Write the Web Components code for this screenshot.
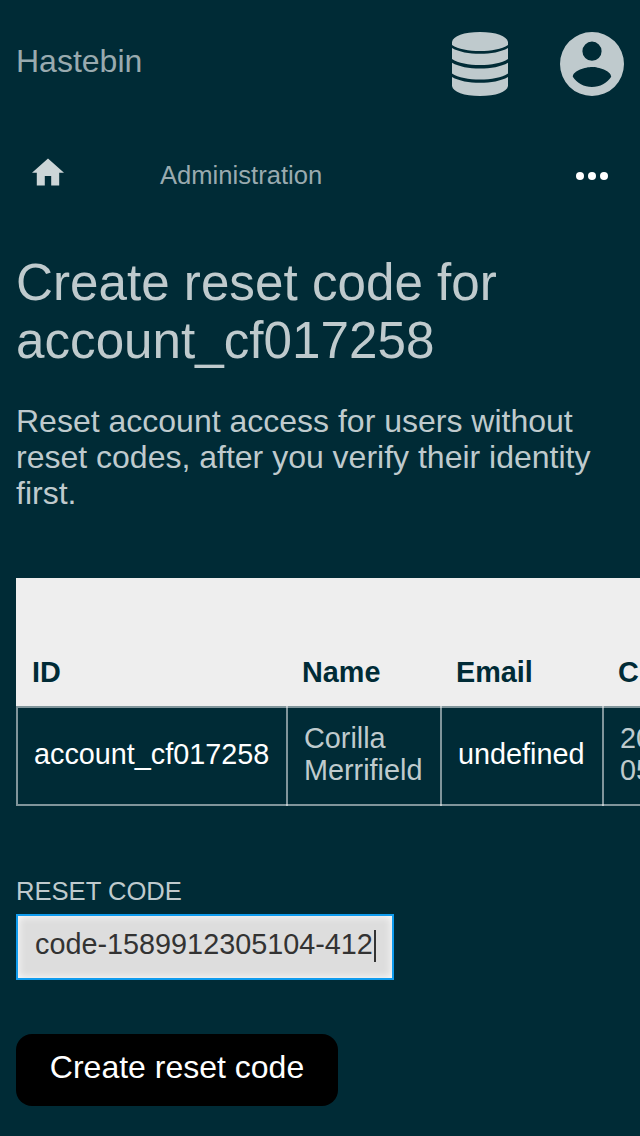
<!DOCTYPE html>
<html lang="en">
<head>
<meta charset="utf-8">
<title>Create reset code</title>
<style>
html,body{margin:0;background:#002b36}
body{width:640px;height:1136px;overflow:hidden;font-family:"Liberation Sans",Arial,sans-serif;font-size:32px;line-height:36px;color:#bfcacd}
</style>
</head>
<body>
<hb-app></hb-app>
<script>
const define = (name, html) => {
  const template = document.createElement('template');
  template.innerHTML = html;
  customElements.define(name, class extends HTMLElement {
    constructor() {
      super();
      this.attachShadow({mode: 'open'}).appendChild(template.content.cloneNode(true));
    }
  });
};

define('hb-header', `<style>
:host{display:flex;height:128px;padding:0 16px;align-items:center;box-sizing:border-box}
span{flex:1;color:#99aaaf;margin-bottom:6px}
svg{display:block;fill:#bfcacd}
.user{margin-left:52px}
</style>
<span><slot></slot></span>
<svg width="56" height="64" viewBox="0 0 56 64"><path d="M0 10C1 4 12 0 28 0S55 4 56 10V13C50 17 39 19 28 19S6 17 0 13ZM0 16C7 20 17 21.8 28 21.8S49 20 56 16V27C50 31 39 33 28 33S6 31 0 27ZM0 30.7C7 34.7 17 36.5 28 36.5S49 34.7 56 30.7V41.5C50 45.5 39 47.5 28 47.5S6 45.5 0 41.5ZM0 45C7 49 17 50.8 28 50.8S49 49 56 45V54C55 60 44 64 28 64S1 60 0 54Z"/></svg>
<svg class="user" width="64" height="64" viewBox="2 2 20 20"><path d="M12 2a10 10 0 1 0 0 20a10 10 0 1 0 0-20zm0 3a3 3 0 1 1 0 6a3 3 0 1 1 0-6zm0 14.2c-2.5 0-4.71-1.28-6-3.22.03-1.99 4-3.08 6-3.08 1.99 0 5.97 1.09 6 3.08-1.29 1.94-3.5 3.22-6 3.22z" fill-rule="evenodd"/></svg>`);

define('hb-nav', `<style>
:host{display:flex;height:96px;padding:0 32px;align-items:center;box-sizing:border-box}
svg{display:block}
span{flex:1;margin-left:96px;font-size:25.6px;line-height:30px;color:#99aaaf;margin-bottom:2px}
.home{fill:#ccd5d7;margin-bottom:8px}
.more{fill:#fff}
</style>
<svg class="home" width="32" height="28" viewBox="2 2.75 20 17.5"><path d="M10 20v-6h4v6h5v-8h3L12 3 2 12h3v8z"/></svg>
<span><slot></slot></span>
<svg class="more" width="32" height="8" viewBox="0 0 32 8"><circle cx="4" cy="4" r="4"/><circle cx="16" cy="4" r="4"/><circle cx="28" cy="4" r="4"/></svg>`);

define('hb-intro', `<style>
:host{display:block;padding:30px 16px 0}
h1{margin:0;font-size:51.2px;line-height:58px;font-weight:400}
p{margin:33px 0 0}
</style>
<h1><slot name="title"></slot></h1>
<p><slot></slot></p>`);

define('hb-table', `<style>
:host{display:grid;grid-template-columns:270px 154px 162px 270px;margin:67px 0 0 16px;width:856px;font-size:28.8px;line-height:32px}
::slotted(b){background:#eee;color:#002b36;height:128px;box-sizing:border-box;padding:78px 16px 18px}
</style>
<slot></slot>`);

define('hb-cell', `<style>
:host{--c:rgba(255,255,255,.5);--side:100%;display:flex;align-items:center;height:100px;box-sizing:border-box;padding:16px 0 20px 18px;
background:linear-gradient(var(--c),var(--c)) left/2px var(--side) no-repeat,linear-gradient(var(--c),var(--c)) top/100% 2px no-repeat,linear-gradient(var(--c),var(--c)) bottom/100% 2px no-repeat}
:host([first]){--side:96px}
:host([strong]){color:#fff}
</style>
<div><slot></slot></div>`);

define('hb-field', `<style>
:host{display:block;margin:70px 16px 0}
label{display:block;font-size:25.6px;line-height:30px;text-transform:uppercase}
.box{display:flex;align-items:center;box-sizing:border-box;width:378px;height:66px;margin-top:8px;padding:0 0 0 17px;border:2px solid #109cee;background:#ddd;box-shadow:inset 0 0 8px #fff;color:#333;font-size:28.8px;line-height:32px}
.value{margin-bottom:6px}
i{width:2px;height:32px;background:#333;margin:0 0 2px 1px}
</style>
<label><slot name="label"></slot></label>
<div class="box"><span class="value"><slot></slot></span><i></i></div>`);

define('hb-button', `<style>
:host{display:block;margin:54px 16px 0}
button{display:block;width:322px;height:72px;border:0;border-radius:16px;background:#000;color:#fff;font:inherit;padding:0 0 6px;text-align:center}
</style>
<button><slot></slot></button>`);

define('hb-app', `<style>:host{display:block;overflow:hidden}</style>
<hb-header>Hastebin</hb-header>
<hb-nav>Administration</hb-nav>
<hb-intro><span slot="title">Create reset code for account_cf017258</span>Reset account access for users without reset codes, after you verify their identity first.</hb-intro>
<hb-table>
<b>ID</b><b>Name</b><b>Email</b><b>Created</b>
<hb-cell first strong>account_cf017258</hb-cell><hb-cell>Corilla<br>Merrifield</hb-cell><hb-cell strong>undefined</hb-cell><hb-cell>2020-<br>05-19</hb-cell>
</hb-table>
<hb-field><span slot="label">Reset code</span>code-1589912305104-412</hb-field>
<hb-button>Create reset code</hb-button>`);
</script>
</body>
</html>
